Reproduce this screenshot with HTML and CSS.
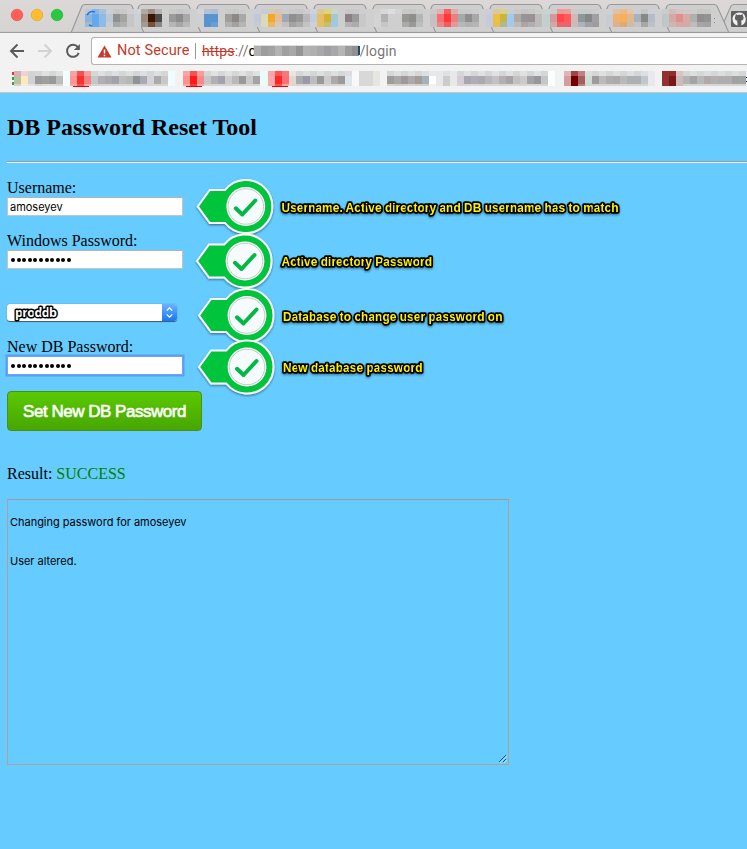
FILE: index.html
```html
<!DOCTYPE html>
<html lang="en">
<head>
<meta charset="utf-8">
<title>DB Password Reset Tool</title>
<link rel="stylesheet" href="styles.css">
</head>
<body>
<header class="chrome">
  <div class="tabstrip">
    <svg id="tabs" width="747" height="33" viewBox="0 0 747 33">
      <g stroke-width=".6">
        <circle cx="17" cy="15" r="5.8" fill="#ff5f57" stroke="#e2463f"/>
        <circle cx="37" cy="15" r="5.8" fill="#ffbd2e" stroke="#dfa023"/>
        <circle cx="57" cy="15" r="5.8" fill="#28c940" stroke="#1dac2c"/>
      </g>
      <g id="tabshapes" fill="#cfcfcf" stroke="#989898" stroke-width="1.1"></g>
      <path d="M0 32.4H747" stroke="#969696"/>
      <path d="M85 9H712V27H85z" fill="#cfcfcf"/>
      <g id="tabmosaic" shape-rendering="crispEdges"></g>
      <path d="M87 15q3-5 8-3M89 25l3 1" stroke="#0b80ee" stroke-width="1.5" fill="none"/>
      <path d="M714.500 18v1M714.500 22v1" stroke="#888"/>
      <rect x="731" y="11" width="18" height="16" rx="1" fill="#606060"/>
      <g transform="translate(732.500 12.500) scale(.83)"><path fill="#f0f0f0" d="M8 0C3.580 0 0 3.580 0 8c0 3.540 2.290 6.530 5.470 7.590.4.070.55-.17.55-.38v-3c-.7-.8-.5-1.800 0-2.300-1.700-.2-3.100-.9-3.100-3.600 0-.9.300-1.600.8-2.100-.1-.5-.1-1.300.2-2 .8 0 1.600.5 2.200.8a8 8 0 0 1 4 0c.6-.4 1.400-.8 2.200-.8.300.7.300 1.500.2 2 .5.500.8 1.200.8 2.100 0 2.700-1.500 3.400-3.200 3.600.6.600.6 1.200.6 2v3c0 .2.150.460.55.380A8 8 0 0 0 8 0z"/></g>
    </svg>
  </div>
  <div class="toolbar">
    <svg class="nav" width="91" height="36" viewBox="0 33 91 36" fill="none" stroke="#5b5b5b" stroke-width="2">
      <path d="M24 51H11.500M17.500 44.500L11 51l6.500 6.500"/>
      <path d="M38 51h12.500M44.500 44.500L51 51l-6.500 6.500" stroke="#d2d2d2"/>
      <path d="M77.800 47.200a6 6 0 1 0 .9 5.600"/>
      <path d="M79.900 44v6h-6z" fill="#5b5b5b" stroke="none"/>
    </svg>
    <div class="omnibox">
      <svg class="warn" width="15" height="13" viewBox="0 0 15 13"><path d="M7.500.5L14.500 12.500H.5z" fill="#c5392a"/><path d="M7.500 4.500v4M7.500 9.700v1.500" stroke="#fff" stroke-width="1.500"/></svg>
      <span class="notsecure">Not Secure</span>
      <span class="rule"></span>
      <span class="url"><s>https</s>://<b>d</b></span>
      <svg id="hosthidden" width="106" height="20" viewBox="0 0 106 20" shape-rendering="crispEdges"></svg>
      <span class="url">/login</span>
    </div>
  </div>
  <svg id="bookmarks" width="747" height="24" viewBox="0 69 747 24" shape-rendering="crispEdges">
    <path d="M12 72h3v3h-3z" fill="#f03030"/><path d="M12 77h3v3h-3zM12 82h3v3h-3z" fill="#2ca052"/>
    <path d="M73 86h16v1H73zM186 86h16v1h-16zM272 86h16v1h-16z" fill="#f00000"/>
    <path d="M745 77h2v1h-2zM745 81h2v1h-2z" fill="#124"/>
  </svg>
</header>
<main>
  <h2>DB Password Reset Tool</h2>
  <hr>
  <label>Username:</label>
  <div class="field">amoseyev</div>
  <label>Windows Password:</label>
  <div class="field dots"><i></i><i></i><i></i><i></i><i></i><i></i><i></i><i></i><i></i><i></i><i></i></div>
  <div class="select"><svg width="62" height="20" viewBox="0 0 62 20"><text class="dbname" x="8" y="12.600" textLength="42">proddb</text></svg>
    <svg class="stepper" width="15" height="17" viewBox="0 0 15 17"><path d="M4.700 6.600L7.500 3.900l2.800 2.700M4.700 10.400l2.800 2.700 2.800-2.700" fill="none" stroke="#fff" stroke-width="1.300"/></svg>
  </div>
  <label>New DB Password:</label>
  <div class="field dots focus"><i></i><i></i><i></i><i></i><i></i><i></i><i></i><i></i><i></i><i></i><i></i></div>
  <button>Set New DB Password</button>
  <p class="result">Result: <span>SUCCESS</span></p>
  <div class="output">
Changing password for amoseyev


User altered.<svg width="9" height="9" viewBox="0 0 9 9"><path d="M1 8L8 1M5 8L8 5" stroke="#24506a"/><path d="M2 9L9 2M6 9L9 6" stroke="#d4f0ff" stroke-width=".6"/></svg></div>
</main>
<svg class="notes" width="450" height="230" viewBox="190 170 450 230">
  <defs>
    <filter id="soft" x="-20%" y="-20%" width="140%" height="150%"><feDropShadow dx="0" dy="1.200" stdDeviation="1" flood-color="#123" flood-opacity=".55"/></filter>
    <g id="pin">
      <path d="M-48 0L-36-16.500H-20.700A26.500 26.500 0 1 1-20.700 16.500H-36Z" fill="#00c43b" stroke="#fff" stroke-width="2" filter="url(#soft)"/>
      <circle r="19.400" fill="#fff"/>
      <circle r="17.800" fill="#f5fbff" stroke="#c4cacc" stroke-width="1"/>
      <path d="M-10 1.800L-3.500 8L9.500-6" fill="none" stroke="#00b843" stroke-width="4" stroke-linecap="round" stroke-linejoin="round"/>
    </g>
  </defs>
  <use href="#pin" x="245.800" y="206.500"/>
  <use href="#pin" x="245" y="261"/>
  <use href="#pin" x="247" y="315.500"/>
  <use href="#pin" x="247" y="367"/>
  <g class="note" filter="url(#soft)">
    <text x="281.500" y="212" textLength="337">Username. Active directory and DB username has to match</text>
    <text x="281.500" y="266" textLength="150.500">Active directory Password</text>
    <text x="283" y="321" textLength="219.500">Database to change user password on</text>
    <text x="283" y="372" textLength="139.500">New database password</text>
  </g>
</svg>
<script src="mosaic.js"></script>
</body>
</html>
```
FILE: styles.css
```css
* { box-sizing: border-box; }
body { margin: 0; height: 849px; overflow: hidden; position: relative; background: #66ccff; color: #000; font-family: "Liberation Serif", serif; font-size: 16px; }
svg { display: block; flex: none; }
.chrome { height: 93px; background: #f2f2f2; border-bottom: 1px solid #c6c6c6; }
.tabstrip { height: 33px; background: linear-gradient(#dcd8d8, #d6d3d3); }
.toolbar { height: 36px; display: flex; padding-top: 0; }
.omnibox { flex: 1; height: 28px; margin-top: 4px; background: #fff; border: 1px solid #b4b4b4; border-right: 0; border-radius: 3px 0 0 3px; display: flex; align-items: center; font: 14px/26px Roboto, sans-serif; white-space: nowrap; }
.warn { margin-left: 5px; }
.notsecure { width: 78px; margin-left: 5px; color: #c5392a; font-size: 14.500px; line-height: 28px; letter-spacing: .12px; }
.rule { width: 1px; height: 16px; background: #999; margin-right: 6px; }
.url { color: #777; font-size: 14px; letter-spacing: .15px; }
.url s { color: #c5392a; }
.url b { color: #000; font-weight: 400; }
#hosthidden { margin-left: -3px; }
main { padding: 20px 0 0 7px; }
h2 { margin: 0; font-size: 24px; line-height: 28px; }
hr { margin: 20px 0 16px; border: 0; border-top: 1px solid #9a9a9a; height: 2px; background: #eee; }
label { display: block; height: 18px; line-height: 18px; }
.field { width: 176px; height: 19px; margin-bottom: 16px; background: #fff; border: 1px solid #c4c4c4; border-top-color: #b4b4b4; padding-left: 2px; font: 11px/19px Inter, sans-serif; letter-spacing: -.02px; }
.dots { display: flex; align-items: center; gap: 1.600px; padding-left: 3px; margin-bottom: 35px; }
.dots i { width: 4px; height: 4px; border-radius: 50%; background: #000; }
.select { display: flex; justify-content: space-between; width: 170px; height: 17px; margin-bottom: 17px; background: #fff; border-radius: 3px; box-shadow: 0 .5px 1px #456; }
.stepper { background: linear-gradient(#6db3fb, #1478fb); border-radius: 0 3px 3px 0; }
.dbname { font: bold 12.500px "Open Sans", sans-serif; fill: #fff; stroke: #000; stroke-width: 3px; paint-order: stroke; stroke-linejoin: round; }
.focus { border: 1px solid #6da5f2; box-shadow: 0 0 0 1.500px #589df6; margin-bottom: 16px; }
button { display: block; width: 195px; height: 40px; padding: 0; border: 1px solid #4b8f13; border-radius: 4px; background: linear-gradient(#5bc900, #48a600); color: #fff; font: 17px/40px "Liberation Sans", sans-serif; letter-spacing: -.48px; -webkit-text-stroke: .6px #fff; }
.result { margin: 34px 0 0; line-height: 18px; }
.result span { color: #008000; }
.output { position: relative; width: 502px; height: 266px; margin-top: 16px; padding: 3px 2px; border: 1px solid #b0a09a; border-top-color: #9c9c9c; white-space: pre; font: 11px/13px Inter, sans-serif; letter-spacing: -.02px; }
.output svg { position: absolute; right: 1px; bottom: 1px; }
.notes { position: absolute; left: 190px; top: 170px; }
.note { font: bold 12px "Liberation Sans", sans-serif; fill: #fff200; stroke: #000; stroke-width: 3.500px; paint-order: stroke; stroke-linejoin: round; }
```
FILE: mosaic.js
```js
const NS = 'http://www.w3.org/2000/svg';
function add(parent, name, attrs) {
  const e = document.createElementNS(NS, name);
  for (const k in attrs) e.setAttribute(k, attrs[k]);
  parent.appendChild(e);
}
const $ = id => document.getElementById(id);

// Tab outlines, back to front from the right
const lefts = [668, 609, 551, 492, 433, 375, 316, 257, 199, 140, 83];
add($('tabshapes'), 'path', {d: 'M719 33L731 6Q732 4.500 734 4.500H750V33Z'});
for (const x of lefts) {
  add($('tabshapes'), 'path', {d: `M${x - 12} 33L${x - 1} 6Q${x} 4.500 ${x + 2} 4.500H${x + 46}Q${x + 48} 4.500 ${x + 49} 6L${x + 61} 33Z`});
}

// Each run: start x, then cells 7px wide as top/middle/bottom colours
function draw(parent, runs, ys) {
  for (const [start, cells] of runs) {
    cells.split(' ').forEach((cell, i) => {
      const c = cell.split('/');
      for (let r = 0; r < 3; r++) {
        const color = c[r] || c[c.length - 1];
        add(parent, 'rect', {x: start + i * 7, y: ys[r], width: 7, height: ys[r + 1] - ys[r], fill: '#' + color});
      }
    });
  }
}
draw($('tabmosaic'), [
  [85, 'c2c6ce/8ab4dc/a4b9cf 86b7e9/64a9f0/64a9f0 a8bfd8/8ebbe6/8ebbe6 cbced2/b9c9d6/c6ced3 c6c6c6/909090/a7a7a7 c9c9c9/a3a3a0/b0b0b0 d0d0d0/c6c6c6/c6c6c6 d0d4d7/c9d0d6/cdd0d2'],
  [141, 'b0aaa5/9b8a80/a59a91 9b8e84/3a1500/7c4f3a b5b2b0/4c4a46/8b8682 cecece cacaca/9b9999/b5b5b5 c6c6c6/8d8b8b/a6a6a6 c9c9c9/a9a9a9/b8b8b8 cfcfcf'],
  [197, 'd2d4d8/cfd0d2 b3c1d2/5895cf/5895cf a8bfd8/5895cf/679fd2 cecece cacaca/9f9c99/b0b0b0 c8c8c8/8a8989/a2a2a2 cccccc/a9a9a9/b5b5b5'],
  [254, 'cbcedb/c0c8da/c6cbd6 c6cbdc/dadab8/dadab8 d8cab0/f4a828/e9b869 d6c4b4/e4bd98/d6c8bb cccccc/a0a8b8/c4bec0 c9c9c9/8f8f8f/a3a3a3 c8c8c8/989898/adadad cccccc/b7b7b7/c3c3c3'],
  [310, 'cfd1db/c2cbe0/cbd0da dcc890/e3c068/e3c068 dfd47c/d4b22f/c4bd72 cbd5cc/a0c9d2/9fc8ea cecece c9c6c6/888084/b6b2b2 c9c9c9/999a9c/acacac cecece/c8c8c8'],
  [374, 'd1d1d1/d3d3d3 d8d8d8/b2b2b2/c6c6c6 dddddd/cfcfcf d3d3d3/cfcfcf c8c8c8/969694/aaaaaa c6c6c6/8e8e8c/999999 cccccc/b5b5b5/bdbdbd'],
  [430, 'ccc9c9/c5c1c1/c9bfc5 e4b0b0/f76e74/e8868a f46060/ff3838/ef5d60 dbaeae/e8807f/e4989b c9cbca/a0aca8/b3b9b6 c9c9c9/8f8d8f/b2b0b2 cccccc/a8a8a8/b5b5b5'],
  [486, 'cdced5/c5cbdc d9c99f/efbf44/e7bd50 ddd281/c8b440/b4b78e c4ced8/a2caee/a2caee ccc8c5/aeaaa5/c1b9b4 c7c4c4/989493/aaa6a8 c8c8c8/989292/b0aeb0 cccccc/bdbaba'],
  [543, 'cbd2d2/c0cfcf cccccc/cf9a9a/d1a8a8 ec9999/ff4848/e9646c ed9b9b/ff5a5a/e9646c d0c7c7/cfb8b8 c5cacb/8d9898/acb3bd c9c9c9/868688/a1a0a3 cccccc/a0a0a2/9d9d9f'],
  [606, 'cfd1d5/c8ccd3 dbc3a8/efb070/ddb28a efb984/faae5c/dcac78 dfc6ac/dfb890/cbbda9 cacfd5/a8b2bc/c3c4c6 c5c5c5/888888/a7a7a7 cdd1d5/b5bcc4/bdc2c8'],
  [662, 'c8ced0/bfc8c8 d1bebc/d4a8a4/cfb4b2 d7c3c2/de918c/d6a9a8 cfc9c8/d8aaa6/d2aaa9 cccccc/b0b0b0/bdbdbd c9c6c6/908e8e/a7a5a5 c9c6c6/949292/a4a3a3']
], [9, 14, 22, 27]);

const grey = (top, mids, bottom) => mids.split(' ').map((m, i) => `${i % 2 ? top : 'd5d6d6'}/${m}/${i % 3 ? bottom : 'd5d5d5'}`).join(' ');
draw($('bookmarks'), [
  [14, 'd8aeb8/b9c49f/d6d5c2 f0d2d0/ffe8c0/f3eddd d3d3d3/cdd2d8/e0e3e8 ' + grey('e1e1e1', '9c999b a0a0a0 999999 bcbcbc', 'dddddd') + ' f2ffff'],
  [70, 'f6a5a5/ff9595/f7a8a8 f45353/f83030/f45353 f79b9b/f58080/f7a8a8 ' + grey('dde0e0', 'bfcac7 b3aeb5 aaa9ae a3a2aa bdbdbd b6b8b8 929494 aaaab2 d4d4d4 aba9aa c8c8c8', 'd2d5d9') + ' f0fdff'],
  [183, 'f6a5a5/ff9090/f7a8a8 f45353/ff1818/ef4040 f79b9b/f58a8a/f7a8a8 ' + grey('e0e2e2', 'c5c8c7 b4b0b2 a4a2ac cccccc bdb8b8 999999 c9c9c9 a5a3a3', 'd2d5d9') + ' e8fcff'],
  [268, 'faa5a5/ffaaaa/f7a8a8 ff5555/ff2828/ff5050 f77878/fb7070/f7a8a8 ebe4e4/e4d5d5 ' + grey('dde0e0', 'a8adac 9c98a8 bdbdbd 999999 cccccc aea9a7 9a9a9d', 'd2d5d9') + ' dddddd/e1e4ea f8f8f8 d8d8d8 d8d8d8 e5e5e2'],
  [387, grey('dde0e0', '9f9d99 a9a9a9 9d9a9f aea9ab a49c96 a8b0bc', 'd0d0ce') + ' e5e8ed/ffffff/f0f0f0 e8e8e8 dfe2e2/cccccc e8e8e8'],
  [457, grey('dfe2e2', 'd4cdd5 aaa6b0 b2adb5 aaaab0 b9b5bb c2c1c3 b5b0af a7a4a9 c4c0bf cacaca a4a3a8 98989b c6c6c6', 'd6d9dc') + ' fcffff'],
  [564, 'e0b5b5/d0a0a0 9c4848/720000/720000 c08080/a55e5e/b98080 d9dfdb/d1dad5 ' + grey('dde0e0', '9c9c9c bcbaba b2adab ababab b9b9b9 b0b0b0 adb1b6 c1c5cc', 'd2d5d9') + ' e8e9ec f2f2f2'],
  [662, '933030 8f2d2d/7a1818/7a1818 d8c3c3/cdbaba ' + grey('d9dedf', 'b3b3b3 a4a4a4 b8b8b8 b0a9a7 b3b1af b1acb0 aeadb0 a2a2a0 a5a5a5', 'd2d5d9')]
], [71, 76, 84, 86]);

const host = 'b0b0b0 9d9d9d a2a2a2 b5b2b5 a0a0a0 aaa7a9 949496 b3b3b3 b0b0b0 a8a8a8 9f9fa2 a7a7aa b5b5b5 9c9c9f 909092'.split(' ');
host.forEach((c, i) => {
  add($('hosthidden'), 'rect', {x: i * 7, y: 5, width: 7, height: 10, fill: '#' + c});
  add($('hosthidden'), 'rect', {x: i * 7, y: 4, width: 7, height: 1, fill: '#dedede'});
});
add($('hosthidden'), 'rect', {x: 104, y: 5, width: 2, height: 9, fill: '#114a79'});
```
